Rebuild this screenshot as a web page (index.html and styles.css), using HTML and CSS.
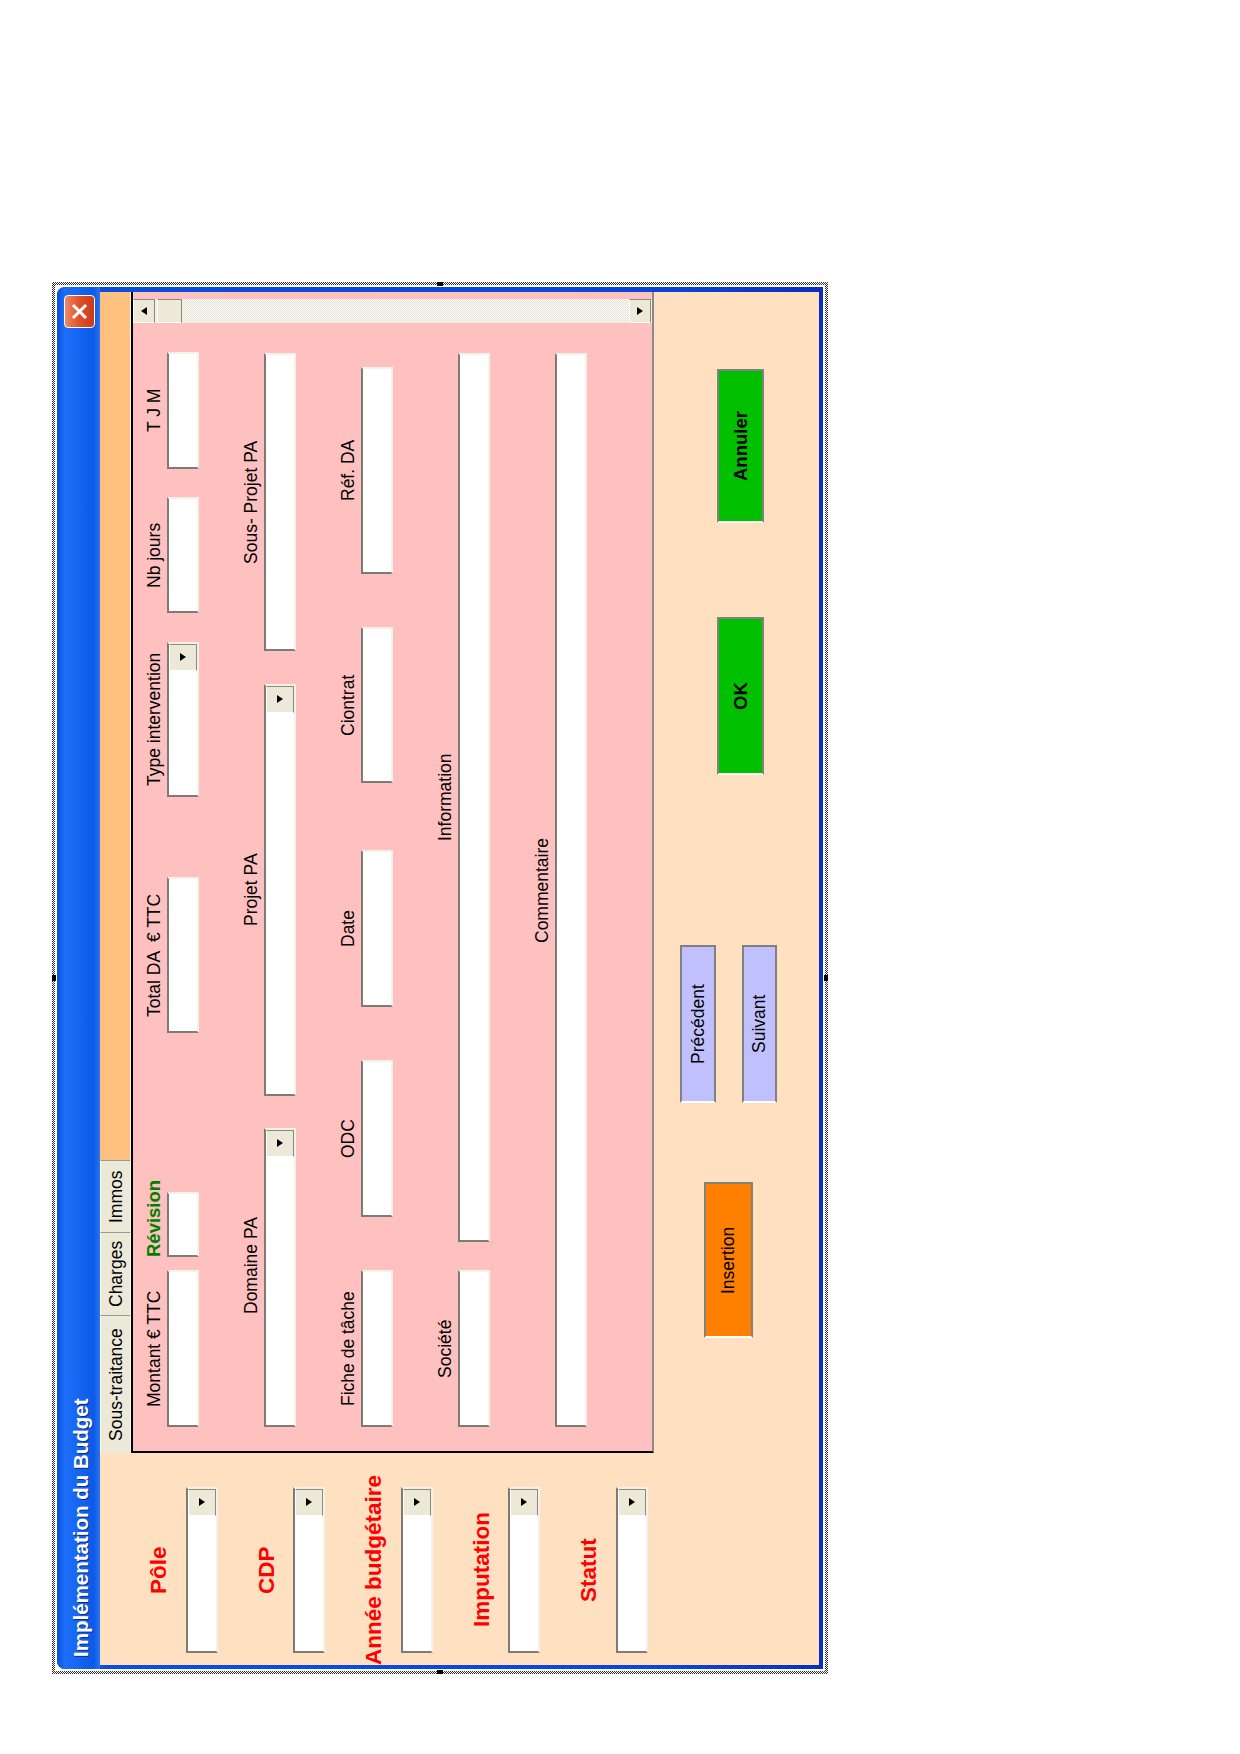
FILE: index.html
```html
<!DOCTYPE html>
<html>
  <head>
    <meta charset="UTF-8">
    <title>Implémentation du Budget</title>
    <link rel="stylesheet" href="styles.css">
  </head>
  <body>
    <!-- Selection frame round the form (the form is printed turned a quarter to the left) -->
    <div class="frame">
      <span class="handle handle-top"></span>
      <span class="handle handle-bottom"></span>
      <span class="handle handle-left"></span>
      <span class="handle handle-right"></span>

      <div class="frame-inner">
        <div class="window">
          <!-- Title bar -->
          <div class="titlebar">
            <span class="title">Implémentation du Budget</span>
            <div class="close">
              <svg width="17" height="17" viewBox="0 0 17 17">
                <path d="M3 3 L14 14 M14 3 L3 14" stroke="#fff" stroke-width="3" stroke-linecap="square"/>
              </svg>
            </div>
          </div>

          <div class="client">
            <!-- Left column: main filters -->
            <div class="side">
              <div class="side-group">
                <div class="side-label">Pôle</div>
                <div class="box combo side-combo"><span class="drop"></span></div>
              </div>
              <div class="side-group">
                <div class="side-label">CDP</div>
                <div class="box combo side-combo"><span class="drop"></span></div>
              </div>
              <div class="side-group">
                <div class="side-label">Année budgétaire</div>
                <div class="box combo side-combo"><span class="drop"></span></div>
              </div>
              <div class="side-group">
                <div class="side-label">Imputation</div>
                <div class="box combo side-combo"><span class="drop"></span></div>
              </div>
              <div class="side-group">
                <div class="side-label">Statut</div>
                <div class="box combo side-combo"><span class="drop"></span></div>
              </div>
            </div>

            <!-- Multipage -->
            <div class="multipage">
              <div class="tabs">
                <div class="tab tab-sous">Sous-traitance</div>
                <div class="tab tab-charges">Charges</div>
                <div class="tab tab-immos">Immos</div>
              </div>

              <div class="page">
                <div class="page-body">
                  <div class="row">
                    <div class="field f-montant"><div class="field-label">Montant € TTC</div><div class="box"></div></div>
                    <div class="field f-revision"><div class="field-label">Révision</div><div class="box"></div></div>
                    <div class="field f-total"><div class="field-label">Total DA &nbsp;€ TTC</div><div class="box"></div></div>
                    <div class="field f-type"><div class="field-label">Type intervention</div><div class="box combo"><span class="drop"></span></div></div>
                    <div class="field f-nbjours"><div class="field-label">Nb jours</div><div class="box"></div></div>
                    <div class="field f-tjm"><div class="field-label">T J M</div><div class="box"></div></div>
                  </div>

                  <div class="row">
                    <div class="field f-domaine"><div class="field-label">Domaine PA</div><div class="box combo"><span class="drop"></span></div></div>
                    <div class="field f-projet"><div class="field-label">Projet PA</div><div class="box combo"><span class="drop"></span></div></div>
                    <div class="field f-sousprojet"><div class="field-label">Sous- Projet PA</div><div class="box"></div></div>
                  </div>

                  <div class="row">
                    <div class="field f-fiche"><div class="field-label">Fiche de tâche</div><div class="box"></div></div>
                    <div class="field f-odc"><div class="field-label">ODC</div><div class="box"></div></div>
                    <div class="field f-date"><div class="field-label">Date</div><div class="box"></div></div>
                    <div class="field f-contrat"><div class="field-label">Ciontrat</div><div class="box"></div></div>
                    <div class="field f-refda"><div class="field-label">Réf. DA</div><div class="box"></div></div>
                  </div>

                  <div class="row">
                    <div class="field f-societe"><div class="field-label">Société</div><div class="box"></div></div>
                    <div class="field f-information"><div class="field-label">Information</div><div class="box"></div></div>
                  </div>

                  <div class="row">
                    <div class="field f-commentaire"><div class="field-label">Commentaire</div><div class="box"></div></div>
                  </div>
                </div>

                <!-- Vertical scrollbar of the page -->
                <div class="scrollbar">
                  <span class="sb-btn sb-up"></span>
                  <span class="sb-thumb"></span>
                  <span class="sb-track"></span>
                  <span class="sb-btn sb-down"></span>
                </div>
              </div>
            </div>

            <!-- Command buttons -->
            <div class="actions">
              <div class="btn btn-insert">Insertion</div>
              <div class="nav">
                <div class="btn btn-nav">Précédent</div>
                <div class="btn btn-nav btn-next">Suivant</div>
              </div>
              <div class="btn btn-ok">OK</div>
              <div class="btn btn-ok btn-cancel">Annuler</div>
            </div>
          </div>
        </div>
      </div>
    </div>
  </body>
</html>
```

FILE: styles.css
```css
/* Reset */
* {
  box-sizing: border-box;
  margin: 0;
  padding: 0;
}

html, body {
  width: 1240px;
  height: 1754px;
  background: #ffffff;
  overflow: hidden;
  font-family: "Liberation Sans", Arial, sans-serif;
  color: #000;
}

/* Room above and left of the printed form */
body {
  padding: 282px 0 0 52px;
}

/*
  The form is printed sideways (title bar on the left, read bottom to top).
  vertical-rl + a half turn gives that, and every size below is written
  with logical properties as if the form stood upright:
  inline = the form's width, block = the form's height.
*/
.frame {
  position: relative;
  writing-mode: vertical-rl;
  text-orientation: sideways;
  transform: rotate(180deg);
  inline-size: 1392px;
  block-size: 776px;
  padding: 3px;
  background: repeating-conic-gradient(#333 0 25%, #fff 0 50%) 0 0 / 2px 2px;
}

.frame-inner {
  block-size: 100%;
  padding: 2px;
  background: #fff;
}

/* Sizing handles on the frame */
.handle {
  position: absolute;
  background: #000;
}

.handle-top, .handle-bottom {
  inset-inline-start: 50%;
  inline-size: 6px;
  block-size: 4px;
  margin-inline-start: -3px;
}

.handle-top { inset-block-start: 0; }
.handle-bottom { inset-block-end: 0; }

.handle-left, .handle-right {
  inset-block-start: 50%;
  inline-size: 4px;
  block-size: 6px;
  margin-block-start: -3px;
}

.handle-left { inset-inline-start: 0; }
.handle-right { inset-inline-end: 0; }

/* XP window ("to left" = from the form's top to its bottom here) */
.window {
  display: flex;
  flex-direction: column;
  inline-size: 1382px;
  block-size: 766px;
  background: linear-gradient(to left, #0b4fdc 0%, #0a46d6 80%, #0a2fbf 100%);
  border-start-start-radius: 8px;
  border-start-end-radius: 8px;
  overflow: hidden;
}

.titlebar {
  display: flex;
  justify-content: space-between;
  align-items: flex-start;
  block-size: 43px;
  flex-shrink: 0;
  background: linear-gradient(to left, #0a4fdb 0%, #1d6ef8 18%, #1767f2 45%, #0b5ae8 85%, #2a74f0 100%);
}

.title {
  padding-block-start: 4px;
  padding-inline-start: 12px;
  line-height: 39px;
  font-size: 20.5px;
  font-weight: bold;
  color: #fff;
  text-shadow: -1px 1px 0 #0b2a8a;
  white-space: nowrap;
}

.close {
  display: flex;
  align-items: center;
  justify-content: center;
  inline-size: 33px;
  block-size: 31px;
  margin-block-start: 7px;
  margin-inline-end: 8px;
  background: linear-gradient(to left, #f08a6a 0%, #e0542c 45%, #c8391a 100%);
  border: 1px solid #fff;
  border-radius: 4px;
}

/* Form body */
.client {
  flex: 1;
  display: grid;
  grid-template-columns: 212px 1fr;
  grid-template-rows: 554px 1fr;
  margin-inline-start: 4px;
  margin-inline-end: 5px;
  margin-block-end: 4px;
  background: #ffe0c0;
}

/* Left column of filters */
.side {
  display: flex;
  flex-direction: column;
  gap: 35.5px;
  padding-block-start: 46px;
  padding-inline-start: 12px;
}

.side-group {
  display: flex;
  flex-direction: column;
  align-items: center;
  gap: 14px;
  inline-size: 166px;
}

.side-label {
  font-size: 22.5px;
  line-height: 26px;
  font-weight: bold;
  color: #ff0000;
  white-space: nowrap;
}

.side-combo {
  align-self: stretch;
  block-size: 33px;
}

/* Sunken text boxes and combo boxes */
.box {
  block-size: 32px;
  background: #fff;
  border: 2px solid #f4f1e8;
  border-block-start-color: #7d7b74;
  border-inline-start-color: #7d7b74;
}

.combo {
  display: flex;
  justify-content: flex-end;
}

.drop {
  display: flex;
  align-items: center;
  justify-content: center;
  inline-size: 27px;
  background: #ece9d8;
  border: 1px solid #8c8a7c;
  border-block-start-color: #fff;
  border-inline-start-color: #fff;
}

.drop::after {
  content: "";
  border-inline: 4px solid transparent;
  border-block-start: 6px solid #000;
}

/* Multipage */
.multipage {
  display: flex;
  flex-direction: column;
}

.tabs {
  display: flex;
  block-size: 31px;
  flex-shrink: 0;
  background: #ffc080;
  border-block-end: 1px solid #fdf3e6;
}

.tab {
  block-size: 30px;
  line-height: 30px;
  font-size: 17.5px;
  text-align: center;
  white-space: nowrap;
  background: #ece9d8;
  border-block-start: 1px solid #fff;
  border-inline-end: 1px solid #8f9a9b;
}

.tab-sous { inline-size: 138px; }
.tab-charges { inline-size: 83px; }
.tab-immos { inline-size: 72px; }

.page {
  flex: 1;
  display: flex;
  padding-inline-end: 7px;
  background: #ffc0c0;
  border-block-start: 2px solid #000;
  border-inline-start: 2px solid #000;
  border-block-end: 2px solid #8a8a8a;
}

.page-body {
  flex: 1;
  padding-block-start: 10.5px;
  padding-inline-start: 24px;
}

.row {
  display: flex;
  align-items: flex-start;
  margin-block-end: 41px;
}

.field {
  display: flex;
  flex-direction: column;
  align-items: center;
  gap: 4px;
}

.field .box {
  align-self: stretch;
}

.field-label {
  font-size: 17.5px;
  line-height: 20px;
  white-space: nowrap;
}

/* Field sizes and spacing, row by row */
.f-montant { inline-size: 157px; }
.f-revision { inline-size: 65px; margin-inline-start: 13px; }
.f-total { inline-size: 156px; margin-inline-start: 159px; }
.f-type { inline-size: 155px; margin-inline-start: 80px; }
.f-nbjours { inline-size: 116px; margin-inline-start: 29px; }
.f-tjm { inline-size: 117px; margin-inline-start: 28px; }

.f-domaine { inline-size: 299px; }
.f-projet { inline-size: 412px; margin-inline-start: 32px; }
.f-sousprojet { inline-size: 298px; margin-inline-start: 33px; }

.f-fiche { inline-size: 157px; }
.f-odc { inline-size: 157px; margin-inline-start: 53px; }
.f-date { inline-size: 157px; margin-inline-start: 53px; }
.f-contrat { inline-size: 156px; margin-inline-start: 67px; }
.f-refda { inline-size: 207px; margin-inline-start: 53px; }

.f-societe { inline-size: 157px; }
.f-information { inline-size: 889px; margin-inline-start: 28px; }

.f-commentaire { inline-size: 1074px; }

.f-revision .field-label {
  align-self: flex-start;
  font-size: 18.5px;
  font-weight: bold;
  color: #008000;
}

.f-domaine .field-label {
  padding-inline-start: 24px;
}

/* Scrollbar */
.scrollbar {
  display: flex;
  flex-direction: column;
  inline-size: 24px;
  background: repeating-conic-gradient(#e6e3d6 0 25%, #fbfbf8 0 50%) 0 0 / 2px 2px;
}

.sb-btn, .sb-thumb {
  display: flex;
  align-items: center;
  justify-content: center;
  background: #ece9d8;
  border: 1px solid #8c8a7c;
  border-block-start-color: #fff;
  border-inline-start-color: #fff;
}

.sb-btn {
  block-size: 22px;
  flex-shrink: 0;
}

.sb-up::after {
  content: "";
  border-inline: 4px solid transparent;
  border-block-end: 6px solid #000;
}

.sb-down::after {
  content: "";
  border-inline: 4px solid transparent;
  border-block-start: 6px solid #000;
}

.sb-thumb {
  block-size: 25px;
  margin-block-start: 2px;
}

.sb-track {
  flex: 1;
}

.sb-down {
  margin-block-end: 1px;
}

/* Command buttons */
.actions {
  grid-column: 1 / -1;
  display: flex;
  align-items: flex-start;
  padding-inline-start: 327px;
}

.btn {
  display: flex;
  align-items: center;
  justify-content: center;
  font-size: 17.5px;
  border: 2px solid #808080;
  border-inline-start-color: #fff;
}

.btn-insert {
  inline-size: 156px;
  block-size: 49px;
  margin-block-start: 50px;
  background: #ff8000;
}

.nav {
  display: flex;
  flex-direction: column;
  gap: 26px;
  margin-block-start: 26px;
  margin-inline-start: 79px;
}

.btn-nav {
  inline-size: 158px;
  block-size: 36px;
  background: #c0c0ff;
}

.btn-next {
  block-size: 35px;
}

.btn-ok {
  inline-size: 158px;
  block-size: 47px;
  margin-block-start: 63px;
  margin-inline-start: 170px;
  background: #00c000;
  font-size: 18.5px;
  font-weight: bold;
}

.btn-cancel {
  inline-size: 154px;
  margin-inline-start: 94px;
}
```
